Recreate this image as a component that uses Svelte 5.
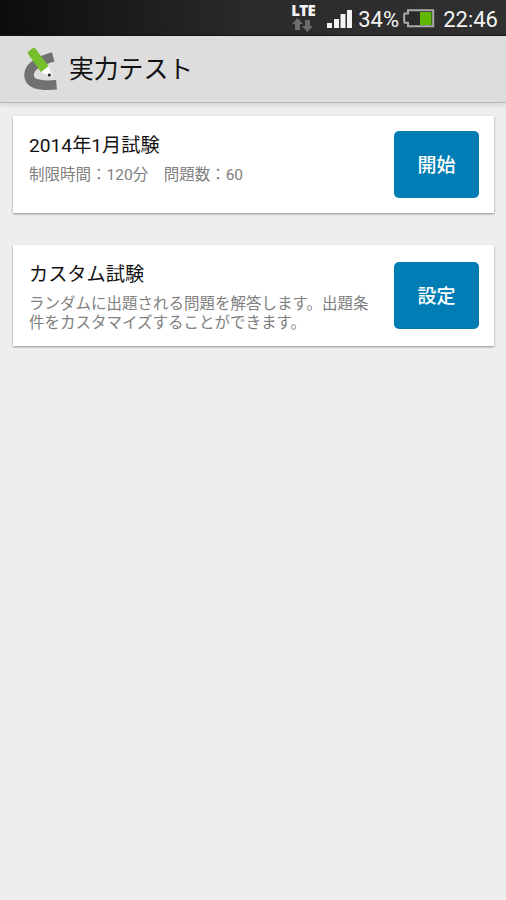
<script lang="ts">
  type Exam = { id: string; title: string; detail: string; action: string }

  const exams: Exam[] = [
    {
      id: 'official',
      title: '2014年1月試験',
      detail: '制限時間：120分　問題数：60',
      action: '開始',
    },
    {
      id: 'custom',
      title: 'カスタム試験',
      detail:
        'ランダムに出題される問題を解答します。出題条件をカスタマイズすることができます。',
      action: '設定',
    },
  ]

  const battery = 34
  const clock = '22:46'
</script>

<div class="screen">
  <div class="status">
    <div class="network">
      <span class="lte">LTE</span>
      <svg width="22" height="14" viewBox="0 0 22 14" aria-hidden="true">
        <path fill="#6c6c6c" d="M5.5 0 11 6H8v6H3V6H0z" />
        <path fill="#6c6c6c" d="M15.5 14 10 8h3V2h5v6h3z" />
      </svg>
    </div>
    <svg class="signal" width="26" height="19" viewBox="0 0 26 19" aria-hidden="true">
      <g fill="#f2f2f2">
        <rect x="0" y="14" width="5" height="5" />
        <rect x="7" y="10" width="5" height="9" />
        <rect x="13.5" y="5" width="5" height="14" />
        <rect x="20" y="1" width="5" height="18" />
      </g>
    </svg>
    <span class="percent">{battery}%</span>
    <svg class="battery" width="32" height="19" viewBox="0 0 32 19" aria-hidden="true">
      <path
        d="M5 1.2h25.2v16H5v-3.4H1.7l-.5-.8V5.4l.5-.8H5z"
        fill="#2b2b2b"
        stroke="#aaa"
        stroke-width="2"
      />
      <rect x="17" y="3" width="11.5" height="13" fill="#62b800" />
    </svg>
    <span class="clock">{clock}</span>
  </div>

  <header class="bar">
    <svg class="logo" width="36" height="44" viewBox="0 0 36 44" aria-hidden="true">
      <path
        d="M30.2 9.8C17 13.5 6 19.5 6 28c0 8.500 9 11.300 27.500 9.800"
        fill="none"
        stroke="#717171"
        stroke-width="9.6"
      />
      <path d="M17 24.500 25.500 18.500 31 24 29.500 32 20.500 28.500z" fill="#e2e2e2" />
      <path d="M18 25 25.500 19 28.500 29.300z" fill="#fff" />
      <path d="M5.600 4.200 9.200 1.400q2-1.400 3.600.5L25.500 19 18 25 5.200 7.300q-1.200-1.800.4-3.100z" fill="#74bf2b" />
      <circle cx="26.300" cy="28" r="1.500" fill="#222" />
    </svg>
    <h1>実力テスト</h1>
  </header>

  <main class="list">
    {#each exams as exam (exam.id)}
      <section class="card {exam.id}">
        <div class="text">
          <h2>{exam.title}</h2>
          <p>{exam.detail}</p>
        </div>
        <button type="button">{exam.action}</button>
      </section>
    {/each}
  </main>
</div>

<style>
  :global(body) {
    background: #eee;
  }

  .screen {
    min-height: 900px;
    background: #eee;
    font-family: Roboto, 'Noto Sans CJK JP', sans-serif;
  }

  .status {
    box-sizing: border-box;
    display: flex;
    justify-content: flex-end;
    height: 36px;
    padding-right: 8px;
    background: linear-gradient(90deg, #0c0c0c, #2b2b2b 50%, #303030);
    border-bottom: 1px solid #161616;
    color: #f4f4f4;
    font-size: 22px;
    line-height: 39px;
  }

  .network {
    display: flex;
    flex-direction: column;
    align-items: center;
    width: 26px;
    margin-right: 11px;
    padding-top: 3px;
  }

  .lte {
    height: 15px;
    font-family: 'Open Sans', sans-serif;
    font-size: 15px;
    font-weight: 800;
    line-height: 15px;
    letter-spacing: -0.6px;
  }

  .signal {
    margin: 9px 5px 0 0;
  }

  .percent {
    width: 41px;
    white-space: nowrap;
  }

  .battery {
    margin: 9px 8px 0 4px;
  }

  .bar {
    box-sizing: border-box;
    display: flex;
    height: 67px;
    padding: 11px 0 0 23px;
    background: #ddd;
    border-bottom: 1px solid #b8b8b8;
    box-shadow: 0 1px 6px rgba(0, 0, 0, 0.15);
  }

  h1 {
    margin: 0 0 0 10px;
    color: #111;
    font-size: 24.8px;
    font-weight: 400;
    line-height: 46px;
  }

  .list {
    display: flex;
    flex-direction: column;
    gap: 32px;
    padding: 13px 12px 0 13px;
  }

  .card {
    box-sizing: border-box;
    display: flex;
    justify-content: space-between;
    height: 97px;
    padding: 15px 15px 0 16px;
    background: #fff;
    box-shadow: 0 1px 2px rgba(0, 0, 0, 0.4);
  }

  .card.custom {
    height: 101px;
    padding-top: 17px;
  }

  .text {
    width: 345px;
  }

  h2 {
    margin: 0;
    color: #111;
    font-size: 19.2px;
    font-weight: 400;
    line-height: 30px;
  }

  .custom h2 {
    margin-top: -2px;
  }

  p {
    margin: 5px 0 0;
    color: #808080;
    font-size: 15.5px;
    line-height: 18.5px;
  }

  button {
    width: 85px;
    height: 67px;
    padding: 0;
    border: none;
    border-radius: 5px;
    background: #007db5;
    color: #fff;
    font-family: inherit;
    font-size: 19px;
    font-weight: 500;
    line-height: 70px;
  }
</style>
